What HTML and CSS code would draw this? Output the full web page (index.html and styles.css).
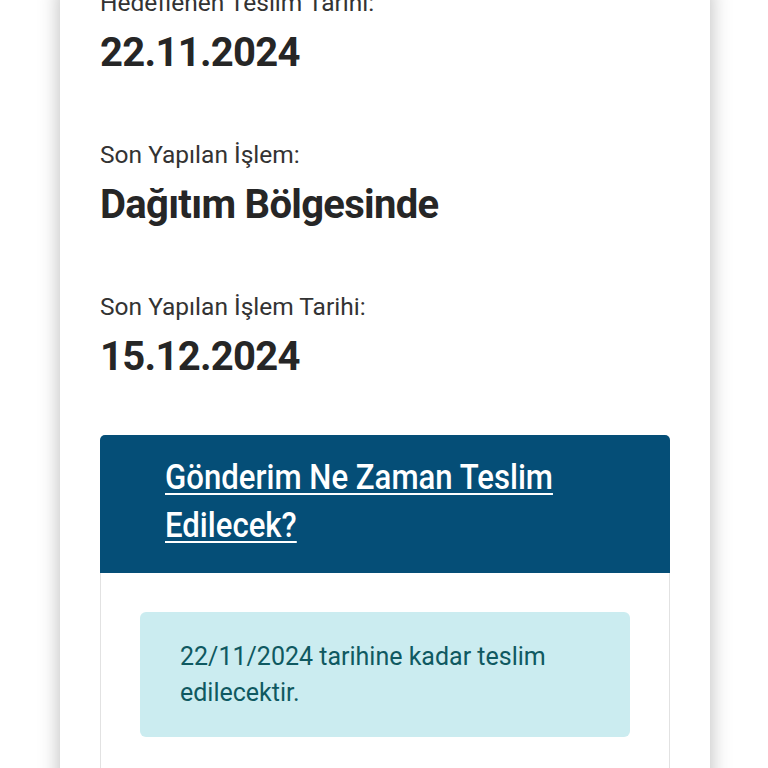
FILE: index.html
```html
<!DOCTYPE html>
<html lang="tr">
<head>
    <meta charset="UTF-8">
    <meta name="viewport" content="width=device-width, initial-scale=1.0">
    <title>Gönderi Takip</title>
    <link rel="stylesheet" href="styles.css">
</head>
<body>
    <div class="card">
        <div class="info">
            <div class="label">Hedeflenen Teslim Tarihi:</div>
            <div class="value">22.11.2024</div>
        </div>
        <div class="info">
            <div class="label">Son Yapılan İşlem:</div>
            <div class="value">Dağıtım Bölgesinde</div>
        </div>
        <div class="info">
            <div class="label">Son Yapılan İşlem Tarihi:</div>
            <div class="value">15.12.2024</div>
        </div>

        <div class="delivery">
            <div class="delivery-header">
                <a href="#" class="delivery-title">Gönderim Ne Zaman Teslim Edilecek?</a>
            </div>
            <div class="delivery-body">
                <div class="alert">22/11/2024 tarihine kadar teslim edilecektir.</div>
            </div>
        </div>
    </div>
</body>
</html>
```

FILE: styles.css
```css
:root {
    --mavi: #054e77;
    --yazi: #333333;
    --koyu: #262626;
    --uyari-bg: #cbecf0;
    --uyari-yazi: #0f5961;
}

* {
    margin: 0;
    padding: 0;
    box-sizing: border-box;
}

body {
    background-color: #ffffff;
    font-family: Roboto, 'Liberation Sans', sans-serif;
    overflow: hidden;
}

.card {
    width: 650px;
    margin: -14px 0 0 60px;
    padding: 0 40px 40px;
    background-color: #ffffff;
    box-shadow: 0 0 20px rgba(0, 0, 0, 0.28);
    min-height: 900px;
}

.info + .info {
    margin-top: 62px;
}

.label {
    font-size: 24.5px;
    line-height: 34px;
    color: var(--yazi);
}

.value {
    margin-top: 10px;
    font-size: 40px;
    line-height: 46px;
    font-weight: 700;
    letter-spacing: -0.7px;
    color: var(--koyu);
}

.delivery {
    margin-top: 55px;
}

.delivery-header {
    background-color: var(--mavi);
    border-radius: 5px 5px 0 0;
    padding: 19px 20px 23px 65px;
}

/* baslik dar yazildigi icin yatayda sikistiriliyor */
.delivery-title {
    display: inline-block;
    width: 480px;
    transform: scaleX(0.89);
    transform-origin: left center;
    color: #ffffff;
    font-size: 35px;
    line-height: 48px;
    font-weight: 500;
    text-decoration: underline;
    text-decoration-thickness: 2px;
    text-underline-offset: 4px;
}

.delivery-body {
    border: 1px solid #e2e2e2;
    border-top: none;
    padding: 39px 39px 40px;
}

.alert {
    background-color: var(--uyari-bg);
    color: var(--uyari-yazi);
    border-radius: 6px;
    padding: 26.5px 40px;
    font-size: 25px;
    line-height: 36px;
}
```
